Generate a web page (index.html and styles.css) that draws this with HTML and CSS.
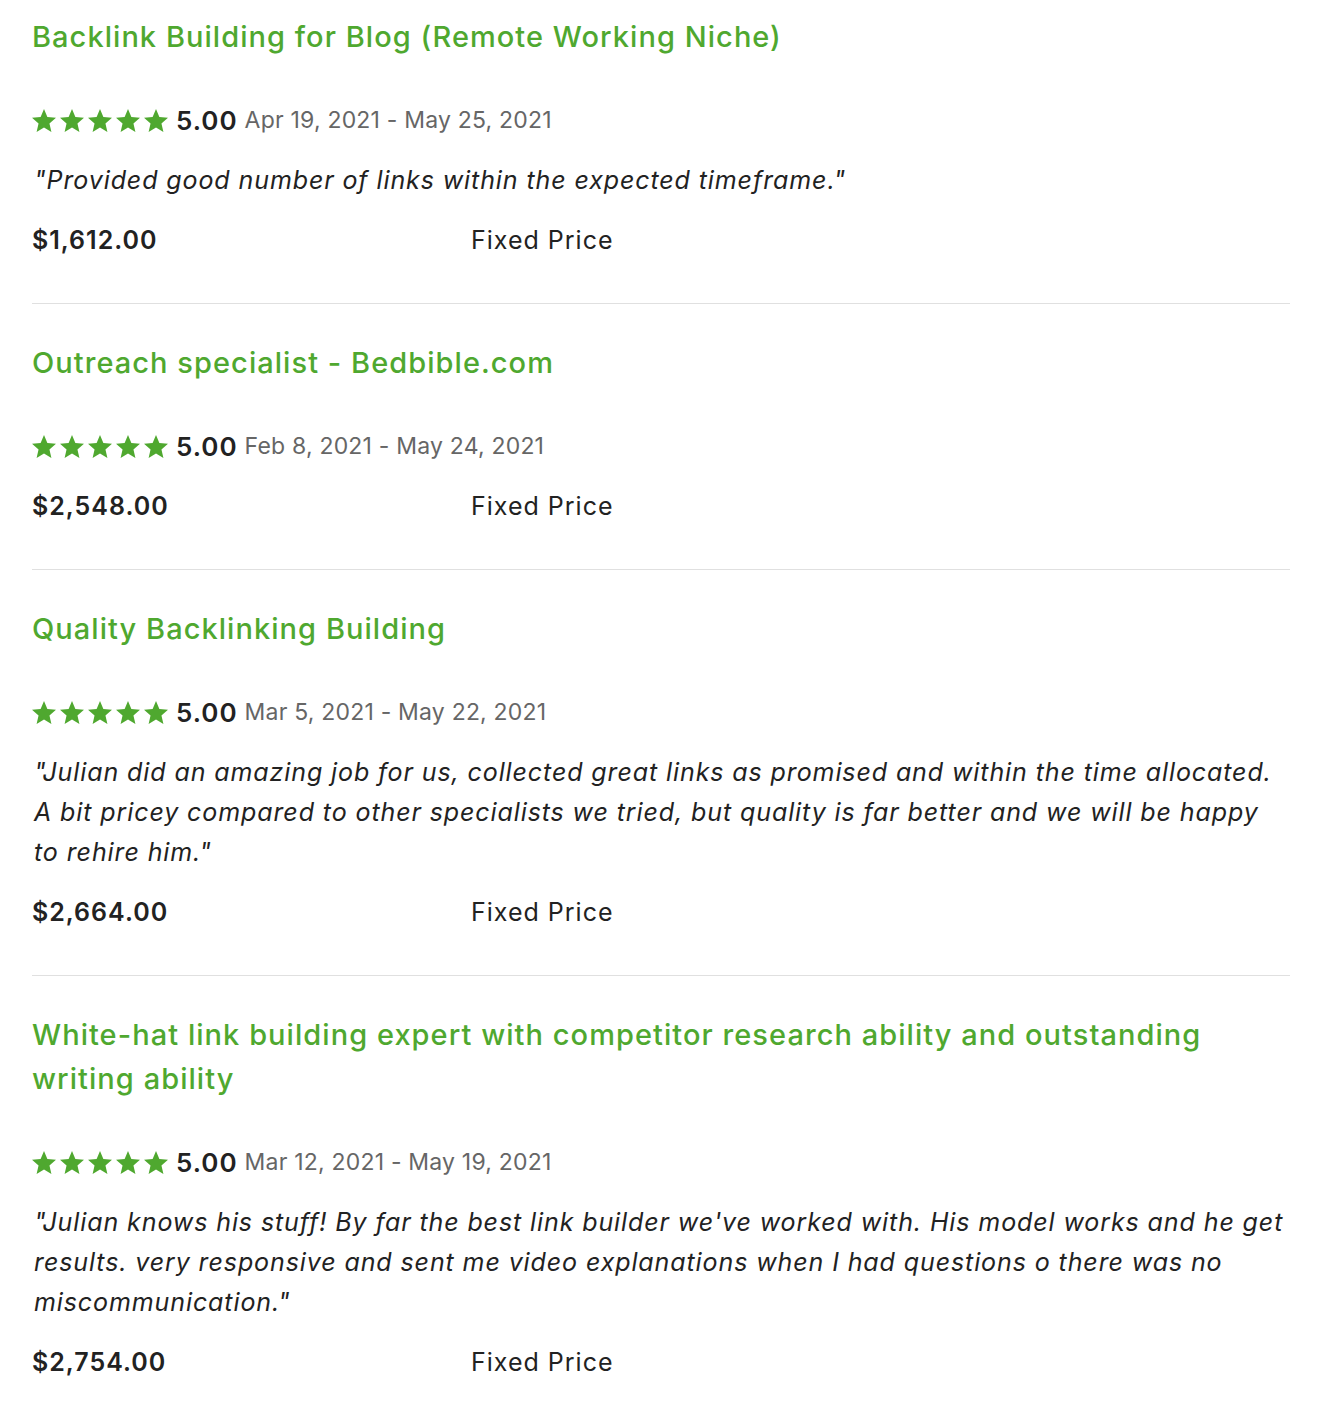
FILE: index.html
```html
<!DOCTYPE html>
<html lang="en">
<head>
    <meta charset="UTF-8">
    <title>Work History</title>
    <link rel="stylesheet" href="styles.css">
</head>
<body>

<div class="container">

    <!-- Job 1 -->
    <div class="job">
        <h2 class="job-title">Backlink Building for Blog (Remote Working Niche)</h2>
        <div class="rating">
            <span class="stars">
                <svg viewBox="2 2 20 19"><path d="M12 17.27L18.18 21l-1.64-7.03L22 9.24l-7.19-.61L12 2 9.19 8.63 2 9.24l5.46 4.73L5.82 21z"/></svg>
                <svg viewBox="2 2 20 19"><path d="M12 17.27L18.18 21l-1.64-7.03L22 9.24l-7.19-.61L12 2 9.19 8.63 2 9.24l5.46 4.73L5.82 21z"/></svg>
                <svg viewBox="2 2 20 19"><path d="M12 17.27L18.18 21l-1.64-7.03L22 9.24l-7.19-.61L12 2 9.19 8.63 2 9.24l5.46 4.73L5.82 21z"/></svg>
                <svg viewBox="2 2 20 19"><path d="M12 17.27L18.18 21l-1.64-7.03L22 9.24l-7.19-.61L12 2 9.19 8.63 2 9.24l5.46 4.73L5.82 21z"/></svg>
                <svg viewBox="2 2 20 19"><path d="M12 17.27L18.18 21l-1.64-7.03L22 9.24l-7.19-.61L12 2 9.19 8.63 2 9.24l5.46 4.73L5.82 21z"/></svg>
            </span>
            <strong class="score">5.00</strong>
            <span class="dates">Apr 19, 2021 - May 25, 2021</span>
        </div>
        <p class="feedback">"Provided good number of links within the expected timeframe."</p>
        <div class="price-row">
            <strong class="amount">$1,612.00</strong>
            <span class="type">Fixed Price</span>
        </div>
    </div>

    <!-- Job 2 -->
    <div class="job">
        <h2 class="job-title">Outreach specialist - Bedbible.com</h2>
        <div class="rating">
            <span class="stars">
                <svg viewBox="2 2 20 19"><path d="M12 17.27L18.18 21l-1.64-7.03L22 9.24l-7.19-.61L12 2 9.19 8.63 2 9.24l5.46 4.73L5.82 21z"/></svg>
                <svg viewBox="2 2 20 19"><path d="M12 17.27L18.18 21l-1.64-7.03L22 9.24l-7.19-.61L12 2 9.19 8.63 2 9.24l5.46 4.73L5.82 21z"/></svg>
                <svg viewBox="2 2 20 19"><path d="M12 17.27L18.18 21l-1.64-7.03L22 9.24l-7.19-.61L12 2 9.19 8.63 2 9.24l5.46 4.73L5.82 21z"/></svg>
                <svg viewBox="2 2 20 19"><path d="M12 17.27L18.18 21l-1.64-7.03L22 9.24l-7.19-.61L12 2 9.19 8.63 2 9.24l5.46 4.73L5.82 21z"/></svg>
                <svg viewBox="2 2 20 19"><path d="M12 17.27L18.18 21l-1.64-7.03L22 9.24l-7.19-.61L12 2 9.19 8.63 2 9.24l5.46 4.73L5.82 21z"/></svg>
            </span>
            <strong class="score">5.00</strong>
            <span class="dates">Feb 8, 2021 - May 24, 2021</span>
        </div>
        <div class="price-row">
            <strong class="amount">$2,548.00</strong>
            <span class="type">Fixed Price</span>
        </div>
    </div>

    <!-- Job 3 -->
    <div class="job">
        <h2 class="job-title">Quality Backlinking Building</h2>
        <div class="rating">
            <span class="stars">
                <svg viewBox="2 2 20 19"><path d="M12 17.27L18.18 21l-1.64-7.03L22 9.24l-7.19-.61L12 2 9.19 8.63 2 9.24l5.46 4.73L5.82 21z"/></svg>
                <svg viewBox="2 2 20 19"><path d="M12 17.27L18.18 21l-1.64-7.03L22 9.24l-7.19-.61L12 2 9.19 8.63 2 9.24l5.46 4.73L5.82 21z"/></svg>
                <svg viewBox="2 2 20 19"><path d="M12 17.27L18.18 21l-1.64-7.03L22 9.24l-7.19-.61L12 2 9.19 8.63 2 9.24l5.46 4.73L5.82 21z"/></svg>
                <svg viewBox="2 2 20 19"><path d="M12 17.27L18.18 21l-1.64-7.03L22 9.24l-7.19-.61L12 2 9.19 8.63 2 9.24l5.46 4.73L5.82 21z"/></svg>
                <svg viewBox="2 2 20 19"><path d="M12 17.27L18.18 21l-1.64-7.03L22 9.24l-7.19-.61L12 2 9.19 8.63 2 9.24l5.46 4.73L5.82 21z"/></svg>
            </span>
            <strong class="score">5.00</strong>
            <span class="dates">Mar 5, 2021 - May 22, 2021</span>
        </div>
        <p class="feedback">"Julian did an amazing job for us, collected great links as promised and within the time allocated. A bit pricey compared to other specialists we tried, but quality is far better and we will be happy to rehire him."</p>
        <div class="price-row">
            <strong class="amount">$2,664.00</strong>
            <span class="type">Fixed Price</span>
        </div>
    </div>

    <!-- Job 4 -->
    <div class="job">
        <h2 class="job-title">White-hat link building expert with competitor research ability and outstanding writing ability</h2>
        <div class="rating">
            <span class="stars">
                <svg viewBox="2 2 20 19"><path d="M12 17.27L18.18 21l-1.64-7.03L22 9.24l-7.19-.61L12 2 9.19 8.63 2 9.24l5.46 4.73L5.82 21z"/></svg>
                <svg viewBox="2 2 20 19"><path d="M12 17.27L18.18 21l-1.64-7.03L22 9.24l-7.19-.61L12 2 9.19 8.63 2 9.24l5.46 4.73L5.82 21z"/></svg>
                <svg viewBox="2 2 20 19"><path d="M12 17.27L18.18 21l-1.64-7.03L22 9.24l-7.19-.61L12 2 9.19 8.63 2 9.24l5.46 4.73L5.82 21z"/></svg>
                <svg viewBox="2 2 20 19"><path d="M12 17.27L18.18 21l-1.64-7.03L22 9.24l-7.19-.61L12 2 9.19 8.63 2 9.24l5.46 4.73L5.82 21z"/></svg>
                <svg viewBox="2 2 20 19"><path d="M12 17.27L18.18 21l-1.64-7.03L22 9.24l-7.19-.61L12 2 9.19 8.63 2 9.24l5.46 4.73L5.82 21z"/></svg>
            </span>
            <strong class="score">5.00</strong>
            <span class="dates">Mar 12, 2021 - May 19, 2021</span>
        </div>
        <p class="feedback">"Julian knows his stuff! By far the best link builder we've worked with. His model works and he get results. very responsive and sent me video explanations when I had questions o there was no miscommunication."</p>
        <div class="price-row">
            <strong class="amount">$2,754.00</strong>
            <span class="type">Fixed Price</span>
        </div>
    </div>

</div>

</body>
</html>
```

FILE: styles.css
```css
body {
    font-family: Inter, "Liberation Sans", Arial, sans-serif;
    margin: 0;
    padding: 0;
    background-color: #fff;
    color: #222;
}
.container {
    width: 1258px;
    padding-left: 32px;
}
.job {
    padding: 37px 0 43px;
    border-bottom: 1px solid #e0e0e0;
}
.job:first-child {
    padding-top: 15px;
}
.job:last-child {
    border-bottom: none;
}
.job-title {
    margin: 0;
    font-size: 29px;
    line-height: 44px;
    font-weight: 500;
    letter-spacing: 1.05px;
    color: #4fa82f;
}
.rating {
    display: flex;
    align-items: center;
    height: 40px;
    margin-top: 41px;
}
.stars {
    display: flex;
    gap: 4px;
    margin-right: 8px;
}
.stars svg {
    width: 24px;
    height: 23px;
    fill: #4fa82f;
}
.score {
    font-size: 26px;
    font-weight: 600;
    letter-spacing: 1px;
    margin-right: 7px;
}
.dates {
    font-size: 23px;
    letter-spacing: 0.2px;
    color: #666;
}
.feedback {
    margin: 20px 0 0;
    padding-left: 2px;
    font-size: 25px;
    line-height: 40px;
    font-style: italic;
    letter-spacing: 0.9px;
}
.price-row {
    display: grid;
    grid-template-columns: 439px 1fr;
    margin-top: 20px;
    line-height: 40px;
    font-size: 25px;
    letter-spacing: 1px;
}
.amount {
    font-weight: 600;
}
```
